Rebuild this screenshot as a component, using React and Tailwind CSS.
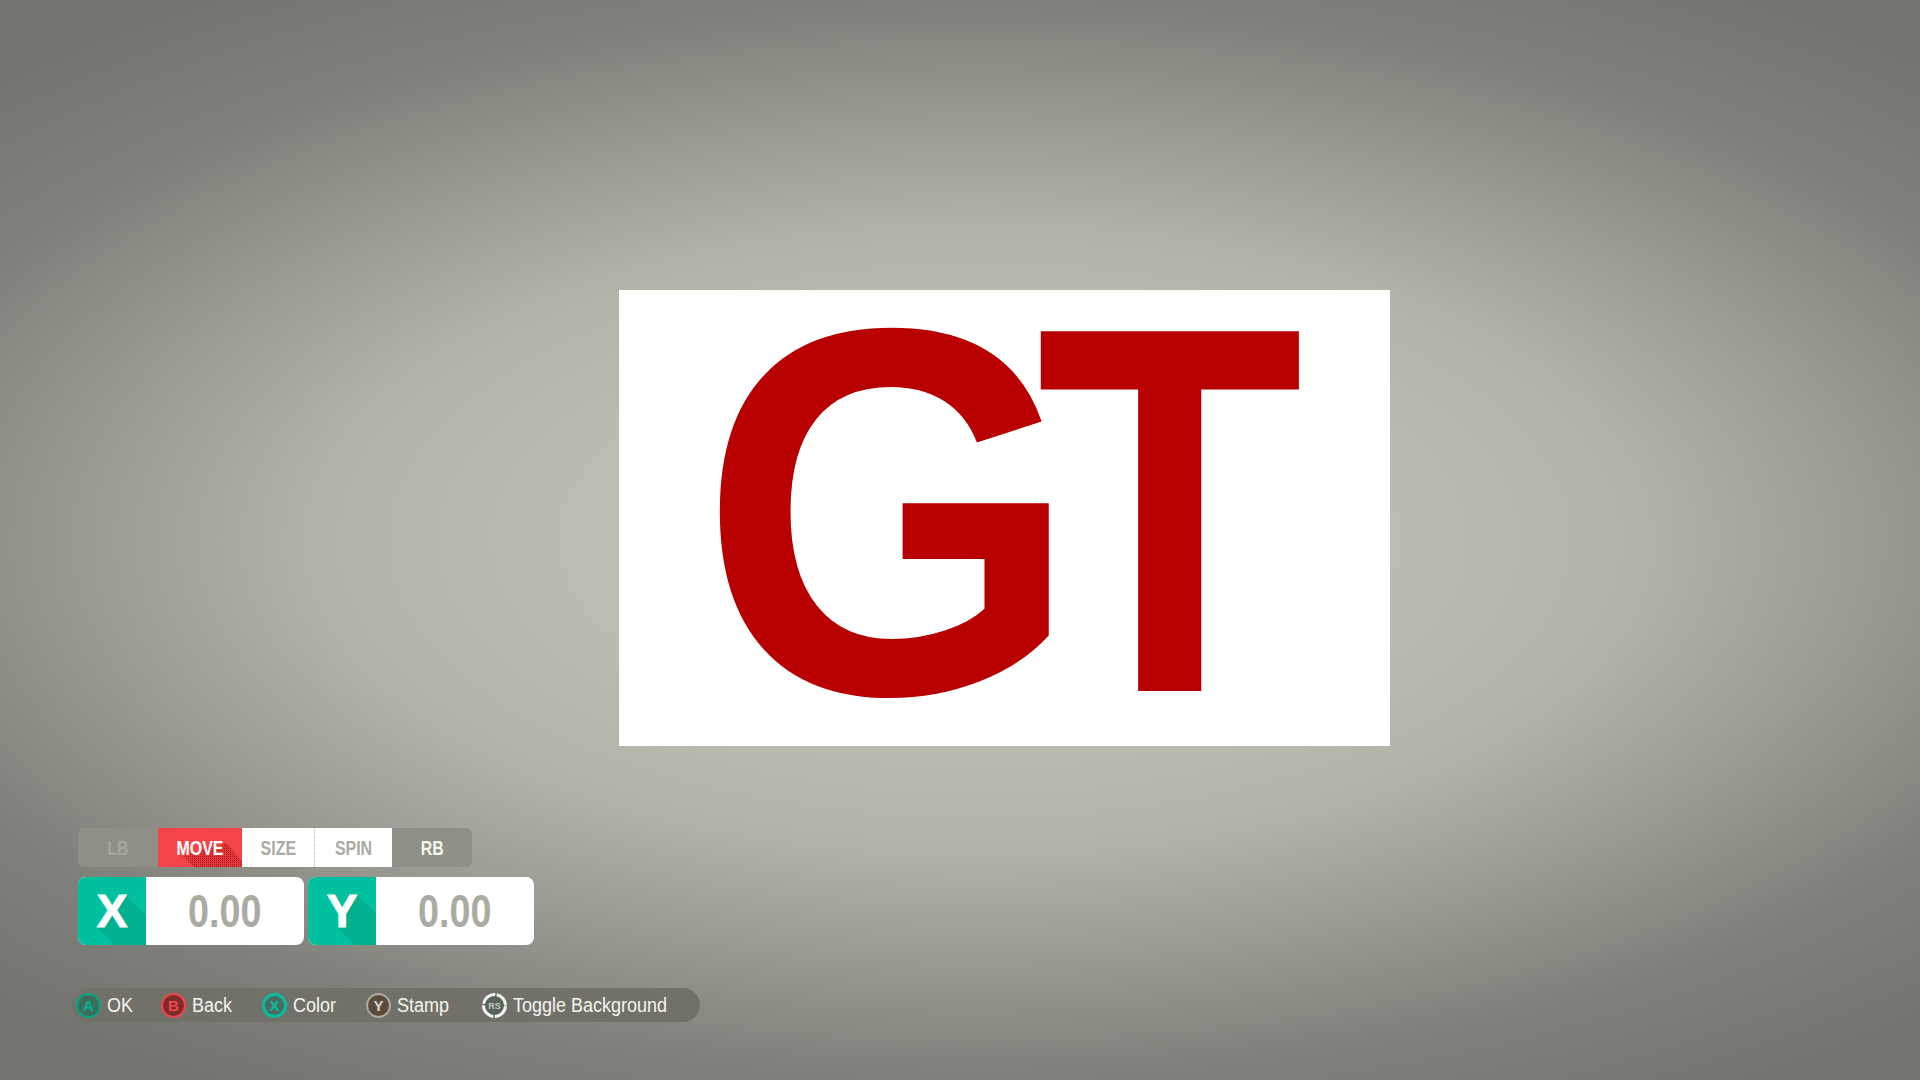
import React from "react";

const sans = "font-['Liberation_Sans',sans-serif]";

function LongShadow({ points, color }) {
  return (
    <svg className="absolute inset-0 h-full w-full" viewBox="0 0 68 68" aria-hidden="true">
      <polygon points={points} fill={color} />
    </svg>
  );
}

function Tab({ children, className, behind }) {
  return (
    <div className={`relative flex h-full items-center justify-center overflow-hidden text-[21px] font-bold leading-none ${className}`}>
      {behind}
      <span className="relative inline-block scale-x-[0.76]">{children}</span>
    </div>
  );
}

function Field({ letter, shadow }) {
  return (
    <div className="flex h-[68px] w-[226px] overflow-hidden rounded-[8px] bg-white">
      <div className="relative flex w-[68px] shrink-0 items-center justify-center overflow-hidden bg-[#00c09f]">
        <LongShadow points={shadow} color="#00b08f" />
        <span className="relative text-[46px] font-black leading-none text-white [-webkit-text-stroke:1px_white]">{letter}</span>
      </div>
      <div className="flex flex-1 items-center justify-center text-[46px] font-bold leading-none text-[#aaaba3]">
        <span className="inline-block scale-x-[0.82]">0.00</span>
      </div>
    </div>
  );
}

function Glyph({ ring, fill, color, width = 2, dashed, label, size = 15 }) {
  return (
    <svg className="h-[25px] w-[25px] shrink-0" viewBox="0 0 25 25" aria-hidden="true">
      <circle cx="12.5" cy="12.5" r={12.5 - width / 2} fill={fill} stroke={ring} strokeWidth={width} strokeDasharray={dashed ? "16.2 1.47" : undefined} strokeDashoffset={dashed ? "-0.73" : undefined} />
      <text x="12.5" y={12.5 + size * 0.36} textAnchor="middle" fontSize={size} fontWeight="700" fill={color} fontFamily="'Liberation Sans',sans-serif">{label}</text>
    </svg>
  );
}

function Hint({ icon, label, className }) {
  return (
    <div className={`flex items-center gap-[6px] ${className}`}>
      {icon}
      <span className="inline-block origin-left scale-x-[0.9] whitespace-nowrap text-[20px] leading-none text-[#f4f4ee]">{label}</span>
    </div>
  );
}

export default function App() {
  return (
    <div className={`flex h-[1080px] w-[1920px] flex-col overflow-hidden bg-[radial-gradient(ellipse_72%_60%_at_51%_50%,#c4c4bc_0%,#c0c0b7_20%,#b9b9af_36%,#b2b2a9_48%,#96968f_68%,#7f8079_83%,#74756e_100%)] ${sans}`}>
      <div className="ml-[619px] mt-[290px] flex h-[456px] w-[771px] items-start bg-white pl-[67px]">
        <span className="mt-[22px] inline-block scale-x-[0.932] text-[523px] font-bold leading-[400px] text-[#b90000]">G</span>
        <span className="-ml-[83px] mt-[20px] inline-block scale-x-[0.838] text-[523px] font-bold leading-[400px] text-[#b90000]">T</span>
      </div>

      <div className="ml-[78px] mt-[82px] flex h-[39px] w-[394px] overflow-hidden rounded-[6px] bg-[#8f8f87]">
        <Tab className="w-[80px] text-[#a6a69e]">LB</Tab>
        <Tab
          className="w-[84px] bg-[#f34549] text-white"
          behind={
            <svg className="absolute inset-0 h-full w-full" viewBox="0 0 84 39" aria-hidden="true">
              <defs>
                <pattern id="dither" width="2" height="2" patternUnits="userSpaceOnUse">
                  <rect width="2" height="2" fill="#e03a3e" />
                  <rect width="1" height="1" fill="#b5161b" />
                </pattern>
              </defs>
              <polygon points="24,28 68,15 84,33 84,39 36,39" fill="url(#dither)" />
            </svg>
          }
        >
          MOVE
        </Tab>
        <Tab className="w-[73px] border-r border-dotted border-[#b5b5ae] bg-white text-[#aaaba3]">SIZE</Tab>
        <Tab className="w-[77px] bg-white text-[#aaaba3]">SPIN</Tab>
        <Tab className="w-[80px] text-[#f4f4ee]">RB</Tab>
      </div>

      <div className="ml-[78px] mt-[10px] flex gap-[4px]">
        <Field letter="X" shadow="19,51 49,20 68,38 68,68 37,68" />
        <Field letter="Y" shadow="30,51 32,30 49,18 68,36 68,68 47,68" />
      </div>

      <div className="ml-[72px] mt-[43px] flex h-[34px] w-[628px] items-center rounded-full bg-[#71716a] pl-[4px]">
        <Hint className="w-[85px]" label="OK" icon={<Glyph ring="#00a584" fill="#3f6b5c" color="#00b593" label="A" />} />
        <Hint className="w-[101px]" label="Back" icon={<Glyph ring="#f2454a" fill="#7f2a2c" color="#f2454a" label="B" />} />
        <Hint className="w-[104px]" label="Color" icon={<Glyph ring="#00c09f" fill="#4c6a60" color="#00c09f" width={3} label="X" />} />
        <Hint className="w-[116px]" label="Stamp" icon={<Glyph ring="#aaaba3" fill="#5b4a3c" color="#d8d8d0" label="Y" />} />
        <Hint label="Toggle Background" icon={<Glyph ring="#f4f4ee" fill="#56635a" color="#c9c9c1" width={3} dashed size={9} label="RS" />} />
      </div>
    </div>
  );
}
